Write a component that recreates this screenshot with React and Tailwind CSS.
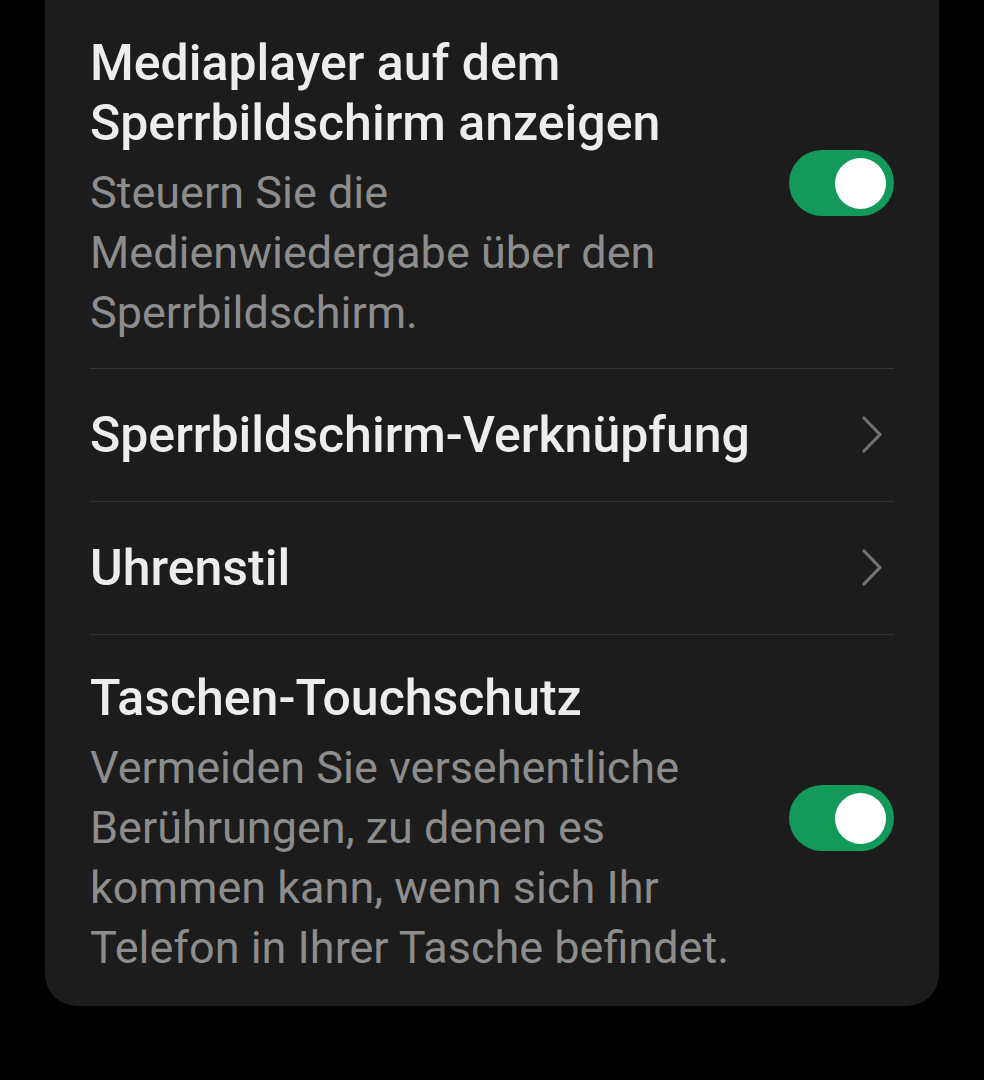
import React from 'react';

const Toggle = ({ on = true }) => (
  <div className={`w-[105px] h-[66px] rounded-full flex items-center px-[8px] shrink-0 mb-[10px] ${on ? 'bg-[#139a5b] justify-end' : 'bg-[#555] justify-start'}`}>
    <div className="w-[51px] h-[51px] rounded-full bg-white" />
  </div>
);

const Chevron = () => (
  <svg width="24" height="40" viewBox="0 0 24 40" className="shrink-0 mr-[10px]" fill="none">
    <polyline points="4,3 20,19.5 4,36" stroke="#717171" strokeWidth="3.2" strokeLinecap="round" strokeLinejoin="round" />
  </svg>
);

function SwitchRow({ title, subtitle, className }) {
  return (
    <div className={`flex items-center gap-[40px] ${className}`}>
      <div className="flex-1 min-w-0">
        <div className="text-[50px] leading-[60px] font-medium text-[#ededed]">{title}</div>
        <div className="mt-[10px] text-[45px] leading-[60px] text-[#8d8d8d]">{subtitle}</div>
      </div>
      <Toggle />
    </div>
  );
}

function LinkRow({ title }) {
  return (
    <div className="h-[133px] flex items-center justify-between border-t border-[#333333]">
      <div className="text-[50px] leading-[60px] font-medium text-[#ededed]">{title}</div>
      <Chevron />
    </div>
  );
}

export default function App() {
  return (
    <div className="min-h-screen bg-black font-['Roboto',sans-serif] antialiased">
      <div className="mx-[45px] bg-[#1c1c1c] rounded-b-[32px] px-[45px]">
        <SwitchRow
          className="pt-[33px] pb-[25px]"
          title="Mediaplayer auf dem Sperrbildschirm anzeigen"
          subtitle="Steuern Sie die Medienwiedergabe über den Sperrbildschirm."
        />
        <LinkRow title="Sperrbildschirm-Verknüpfung" />
        <LinkRow title="Uhrenstil" />
        <div className="border-t border-[#333333]">
          <SwitchRow
            className="pt-[33px] pb-[28px]"
            title="Taschen-Touchschutz"
            subtitle="Vermeiden Sie versehentliche Berührungen, zu denen es kommen kann, wenn sich Ihr Telefon in Ihrer Tasche befindet."
          />
        </div>
      </div>
    </div>
  );
}
